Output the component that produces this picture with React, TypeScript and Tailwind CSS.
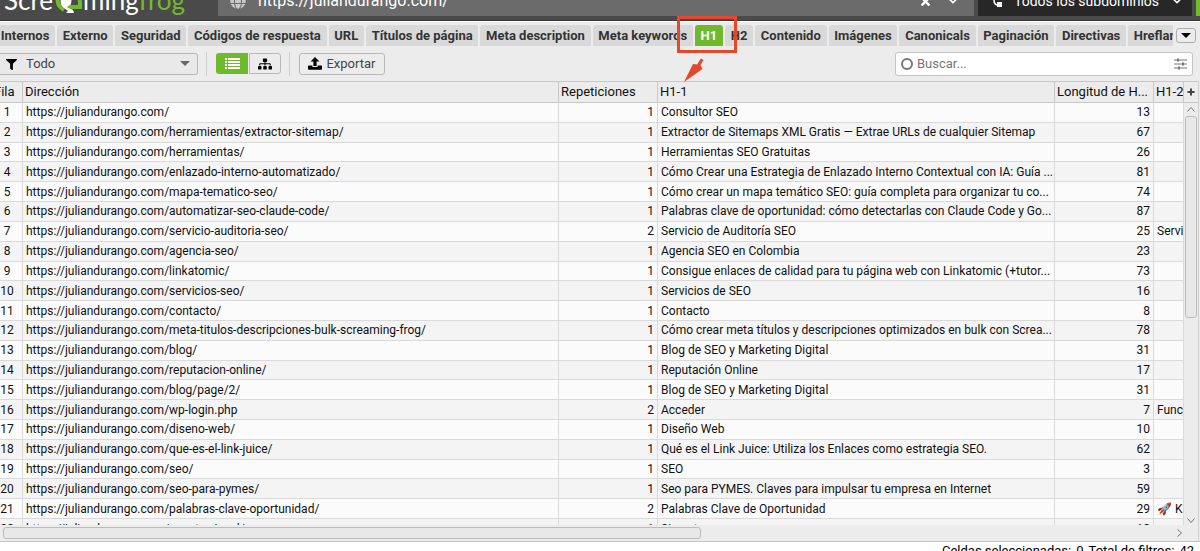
import { useState } from 'react';
import clsx from 'clsx';
import { FaChevronDown, FaFilter, FaGlobe, FaSitemap, FaTimes } from 'react-icons/fa';

const TABS = [
  'Internos', 'Externo', 'Seguridad', 'Códigos de respuesta', 'URL', 'Títulos de página',
  'Meta description', 'Meta keywords', 'H1', 'H2', 'Contenido', 'Imágenes', 'Canonicals',
  'Paginación', 'Directivas', 'Hreflang',
];

const SITE = 'https://juliandurango.com/';

type Row = { path: string; count: number; h1: string; len: number; h2?: string };

const ROWS: Row[] = [
  { path: '', count: 1, h1: 'Consultor SEO', len: 13 },
  { path: 'herramientas/extractor-sitemap/', count: 1, h1: 'Extractor de Sitemaps XML Gratis — Extrae URLs de cualquier Sitemap', len: 67 },
  { path: 'herramientas/', count: 1, h1: 'Herramientas SEO Gratuitas', len: 26 },
  { path: 'enlazado-interno-automatizado/', count: 1, h1: 'Cómo Crear una Estrategia de Enlazado Interno Contextual con IA: Guía ...', len: 81 },
  { path: 'mapa-tematico-seo/', count: 1, h1: 'Cómo crear un mapa temático SEO: guía completa para organizar tu co...', len: 74 },
  { path: 'automatizar-seo-claude-code/', count: 1, h1: 'Palabras clave de oportunidad: cómo detectarlas con Claude Code y Go...', len: 87 },
  { path: 'servicio-auditoria-seo/', count: 2, h1: 'Servicio de Auditoría SEO', len: 25, h2: 'Servicios' },
  { path: 'agencia-seo/', count: 1, h1: 'Agencia SEO en Colombia', len: 23 },
  { path: 'linkatomic/', count: 1, h1: 'Consigue enlaces de calidad para tu página web con Linkatomic (+tutor...', len: 73 },
  { path: 'servicios-seo/', count: 1, h1: 'Servicios de SEO', len: 16 },
  { path: 'contacto/', count: 1, h1: 'Contacto', len: 8 },
  { path: 'meta-titulos-descripciones-bulk-screaming-frog/', count: 1, h1: 'Cómo crear meta títulos y descripciones optimizados en bulk con Screa...', len: 78 },
  { path: 'blog/', count: 1, h1: 'Blog de SEO y Marketing Digital', len: 31 },
  { path: 'reputacion-online/', count: 1, h1: 'Reputación Online', len: 17 },
  { path: 'blog/page/2/', count: 1, h1: 'Blog de SEO y Marketing Digital', len: 31 },
  { path: 'wp-login.php', count: 2, h1: 'Acceder', len: 7, h2: 'Funciones' },
  { path: 'diseno-web/', count: 1, h1: 'Diseño Web', len: 10 },
  { path: 'que-es-el-link-juice/', count: 1, h1: 'Qué es el Link Juice: Utiliza los Enlaces como estrategia SEO.', len: 62 },
  { path: 'seo/', count: 1, h1: 'SEO', len: 3 },
  { path: 'seo-para-pymes/', count: 1, h1: 'Seo para PYMES. Claves para impulsar tu empresa en Internet', len: 59 },
  { path: 'palabras-clave-oportunidad/', count: 2, h1: 'Palabras Clave de Oportunidad', len: 29, h2: '🚀 K' },
  { path: 'cuenta-visual/', count: 1, h1: 'Sin autores', len: 18 },
];

const Caret = ({ className }: { className?: string }) => (
  <svg viewBox="0 0 10 5" className={clsx('h-[5px] w-[10px] shrink-0 fill-current', className)} aria-hidden>
    <path d="M0 0h10L5 5z" />
  </svg>
);

const FrogMark = () => (
  <svg viewBox="0 0 30 30" className="h-[30px] w-[30px] shrink-0" fill="none" aria-hidden>
    <path d="M9 9C3 13 3 20 11 25" stroke="#74b92c" strokeWidth="4" />
    <path d="M18 11c6-2 9 2 9 7v4h-8c-3 0-4-2-3-4" stroke="#74b92c" strokeWidth="4" />
    <path d="M8 8c4-3 10-1 11 4l-1 7-4 3 6 3 1 3h-8l2-2-4-3c-3-2-4-6-3-9z" fill="#fff" />
  </svg>
);

const UploadIcon = () => (
  <svg viewBox="0 0 14 13" className="h-[13px] w-[14px] fill-black" aria-hidden>
    <path d="M7 0l4.5 4.5H8.6V9H5.4V4.5H2.500z" />
    <path d="M.8 8.500h3.600V10h5.200V8.500h3.600q.8 0 .8.800V12q0 .8-.8.8H.8q-.8 0-.8-.8V9.300q0-.8.800-.8z" />
  </svg>
);

const ListIcon = () => (
  <svg viewBox="0 0 15 11" className="h-[11px] w-[15px] fill-white" aria-hidden>
    <path d="M0 0h2v2H0zM3 0h12v2H3zM0 3h2v2H0zM3 3h12v2H3zM0 6h2v2H0zM3 6h12v2H3zM0 9h2v2H0zM3 9h12v2H3z" />
  </svg>
);

const SlidersIcon = () => (
  <svg viewBox="0 0 13 12" className="h-[12px] w-[13px]" stroke="#777" fill="#777" aria-hidden>
    <path d="M0 2h13M0 6h13M0 10h13" strokeWidth="1.200" />
    <path d="M4 .5v3M9 4.500v3M5 8.500v3" strokeWidth="2" />
  </svg>
);

function TopBar() {
  return (
    <header className="flex h-[21px] shrink-0 items-end overflow-hidden border-b border-[#3c3c3c] bg-[#4a4a4a] pb-1 text-white">
      <div className="flex h-8 w-[218px] shrink-0 items-center pl-1 font-['Lato',sans-serif] text-[26px] leading-[30px]">
        <span>Scre</span>
        <FrogMark />
        <span>ming</span>
        <span className="text-[#74b92c]">frog</span>
      </div>
      <div className="flex h-[30px] flex-1 items-center bg-[#6b6b6b] pr-4 pl-3">
        <FaGlobe size={16} className="text-[#c8c8c8]" />
        <input aria-label="URL" defaultValue={SITE} className="ml-3 h-5 min-w-0 flex-1 bg-transparent text-base leading-5 outline-none" />
        <button aria-label="Borrar"><FaTimes size={13} /></button>
        <button aria-label="Historial" className="ml-4"><FaChevronDown size={10} /></button>
      </div>
      <button className="ml-1 flex h-[30px] w-[214px] items-center bg-[#272727] pr-2.5 pl-3.5 text-sm">
        <svg viewBox="0 0 10 16" className="h-4 w-[10px]" aria-hidden>
          <path d="M2 2v5q0 5 4 5" fill="none" stroke="#fff" strokeWidth="1.500" />
          <path d="M0 1h4v4H0zM5 9h5v5H5z" fill="#fff" />
        </svg>
        <span className="ml-3 flex-1 text-left">Todos los subdominios</span>
        <FaChevronDown size={10} />
      </button>
      <div className="ml-1 h-[30px] w-1 bg-[#74b92c]" />
    </header>
  );
}

function Toolbar() {
  const [view, setView] = useState<'list' | 'tree'>('list');
  return (
    <div className="flex h-[35px] shrink-0 items-center pr-[7px] text-[13px] text-[#444]">
      <div className="relative">
        <FaFilter size={11} className="absolute top-1.5 left-1.5 text-black" />
        <select aria-label="Filtro" className="h-[22px] w-[198px] appearance-none rounded-r-[3px] border border-l-0 border-[#b8b8b8] bg-[#e9e9e9] pl-[26px]">
          <option>Todo</option>
        </select>
        <Caret className="absolute top-2 right-2 text-[#666]" />
      </div>
      <span className="mr-[9px] ml-2 h-6 w-px bg-[#cfcfcf]" />
      <div className="flex gap-px">
        <button
          aria-label="Lista"
          onClick={() => setView('list')}
          className={clsx('flex h-[21px] w-8 items-center justify-center rounded-l-[3px]', view === 'list' ? 'bg-[#6fb92c]' : 'bg-gray-400')}
        ><ListIcon /></button>
        <button
          aria-label="Árbol"
          onClick={() => setView('tree')}
          className="flex h-[21px] w-8 items-center justify-center rounded-r-[3px] border border-[#b8b8b8] text-black"
        ><FaSitemap size={14} /></button>
      </div>
      <span className="mr-[9px] ml-2 h-6 w-px bg-[#cfcfcf]" />
      <button className="flex h-[22px] w-[86px] items-center justify-center gap-1 rounded-[3px] border border-[#b8b8b8]">
        <UploadIcon /> Exportar
      </button>
      <label className="ml-auto flex h-6 w-[298px] items-center rounded-[3px] border border-[#c4c4c4] bg-white px-[5px]">
        <span className="h-3 w-3 rounded-full border-2 border-[#777]" />
        <input placeholder="Buscar..." aria-label="Buscar" className="ml-1 min-w-0 flex-1 outline-none placeholder:text-[#777]" />
        <SlidersIcon />
      </label>
    </div>
  );
}

const cell = 'overflow-hidden whitespace-nowrap border-r border-b border-[#dadada] px-[3px] leading-[18px]';
const head = 'h-[22px] overflow-hidden whitespace-nowrap border-y border-r border-[#c8c8c8] px-[2px] text-left font-normal leading-[18px]';

function ResultsTable() {
  return (
    <table className="-ml-2 h-[458px] w-[1192px] min-w-full table-fixed border-separate border-spacing-0 text-xs text-[#111]">
      <colgroup>
        <col className="w-[31px]" />
        <col className="w-[536px]" />
        <col className="w-[99px]" />
        <col className="w-[397px]" />
        <col className="w-[99px]" />
        <col />
      </colgroup>
      <thead className="bg-[#ececec] text-[13px]">
        <tr>
          <th className={head}>Fila</th>
          <th className={head}>Dirección</th>
          <th className={head}>Repeticiones</th>
          <th className={head}>H1-1</th>
          <th className={head}>Longitud de H...</th>
          <th className={head}>H1-2</th>
        </tr>
      </thead>
      <tbody>
        {ROWS.map((r, i) => (
          <tr key={i} className="odd:bg-[#fbfbfb] even:bg-[#f4f4f4]">
            <td className={clsx(cell, 'text-center')}>{i + 1}</td>
            <td className={cell}>{SITE}{r.path}</td>
            <td className={clsx(cell, 'text-right')}>{r.count}</td>
            <td className={cell}>{r.h1}</td>
            <td className={clsx(cell, 'text-right')}>{r.len}</td>
            <td className={cell}>{r.h2}</td>
          </tr>
        ))}
      </tbody>
    </table>
  );
}

export default function App() {
  const [tab, setTab] = useState('H1');

  return (
    <div className="relative flex h-screen flex-col overflow-hidden bg-[#ececec] font-['Roboto',sans-serif]">
      <TopBar />

      <nav className="flex shrink-0 items-center border-t border-white pt-[3px]">
        <div className="min-w-0 flex-1 overflow-hidden">
          <div className="-mr-[17px] -ml-[5px] flex gap-0.5">
            {TABS.map(t => (
              <button
                key={t}
                onClick={() => setTab(t)}
                className={clsx(
                  'h-[21px] shrink-0 grow rounded-t-[3px] px-[5px] text-[13px] leading-5 font-bold',
                  t === tab ? 'bg-[#6fb92c] text-white' : 'bg-[#d9d9d9] text-[#333]'
                )}
              >
                {t}
              </button>
            ))}
          </div>
        </div>
        <button aria-label="Más pestañas" className="mr-1 ml-[3px] flex h-[15px] w-5 items-center justify-center rounded-[3px] border border-[#b0b0b0] text-black">
          <Caret />
        </button>
      </nav>

      <Toolbar />

      <main className="flex min-h-0 flex-1 border-b border-[#c4c4c4]">
        <div className="flex min-w-0 flex-1 flex-col">
          <div className="min-h-0 flex-1 overflow-hidden"><ResultsTable /></div>
          <div className="flex h-4 shrink-0 items-center justify-between pr-0.5 pl-[3px]">
            <div className="h-3 w-[698px] rounded-[3px] border border-[#bcbcbc] bg-[#e8e8e8]" />
            <svg viewBox="0 0 5 8" className="h-2 w-[5px]" fill="none" stroke="#777" aria-hidden><path d="M.5.5L4.500 4 .5 7.500" /></svg>
          </div>
        </div>
        <div className="mr-px flex w-[15px] shrink-0 flex-col items-center border-r border-[#cfcfcf] pb-4">
          <button aria-label="Columnas" className="flex h-[22px] w-full shrink-0 items-center justify-center border-y border-[#c8c8c8]">
            <svg viewBox="0 0 8 8" className="h-2 w-2" aria-hidden><path d="M4 .5v7M.5 4h7" stroke="#444" strokeWidth="2" /></svg>
          </button>
          <svg viewBox="0 0 8 5" className="my-1 h-[5px] w-2 shrink-0" fill="none" stroke="#777" aria-hidden><path d="M.5 4.500L4 .5l3.500 4" /></svg>
          <div className="h-[202px] w-3 rounded-[3px] border border-[#bcbcbc] bg-[#e8e8e8]" />
          <svg viewBox="0 0 8 5" className="mt-auto mb-0.5 h-[5px] w-2 shrink-0" fill="none" stroke="#777" aria-hidden><path d="M.5.5L4 4.500l3.500-4" /></svg>
        </div>
      </main>

      <footer className="-mb-[9px] flex h-[18px] shrink-0 items-center justify-end gap-[5px] bg-white pr-1.5 text-[13px] text-black">
        <span className="flex gap-[5px]">Celdas seleccionadas: <span>0</span></span>
        <span className="flex gap-[5px]">Total de filtros: <span>42</span></span>
      </footer>

      {/* marca roja sobre la pestaña H1 */}
      <div className="pointer-events-none absolute top-4 left-[677px]">
        <div className="h-[37px] w-[60px] border-3 border-[#e5472d]" />
        <svg viewBox="0 0 20 24" className="mt-[5px] ml-[7px] h-6 w-5 fill-[#e5472d]" aria-hidden>
          <path d="M0 24L9 6l4 .5L17 .5l2.500 1.500-3 5 2 4z" />
        </svg>
      </div>
    </div>
  );
}
